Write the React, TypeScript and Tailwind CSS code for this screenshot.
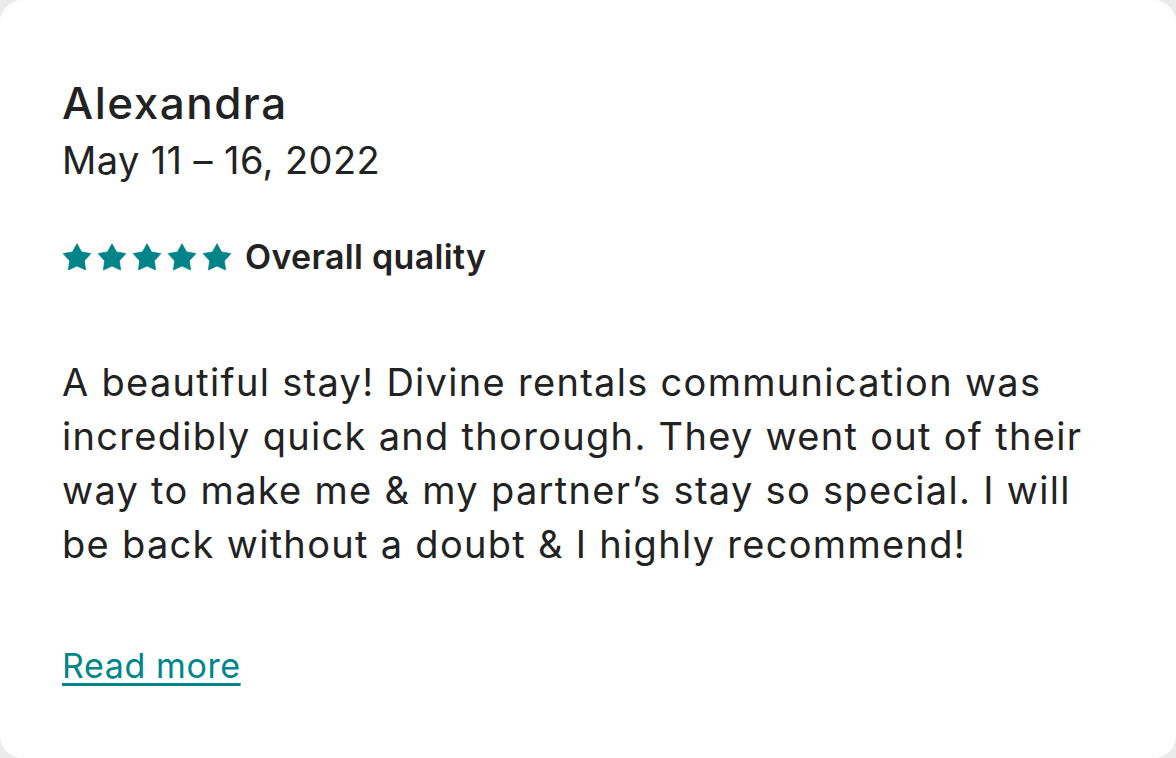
const lines = [
  'A beautiful stay! Divine rentals communication was',
  'incredibly quick and thorough. They went out of their',
  'way to make me & my partner’s stay so special. I will',
  'be back without a doubt & I highly recommend!',
];

function StarIcon() {
  return (
    <svg viewBox="0 0 24 23" className="h-[28px] w-[30px]" aria-hidden="true">
      <path
        fill="#008489"
        stroke="#008489"
        strokeWidth={0.6}
        strokeLinejoin="round"
        d="M12 0.6L15.76 7.32L23.4 8.7L18.09 14.48L19.03 22.2L12 18.9L4.97 22.2L5.91 14.48L0.6 8.7L8.24 7.32Z"
      />
    </svg>
  );
}

export default function App() {
  return (
    <div className="h-[758px] w-[1176px] bg-[#ebebeb]" style={{ fontFamily: 'Inter, "Noto Sans", sans-serif' }}>
      <div className="h-full w-full rounded-[22px] bg-white px-[62px] pt-[77px] text-[#222222]">
        {/* Reviewer */}
        <div className="text-[44px] font-medium leading-[52px] tracking-[1.5px]">Alexandra</div>
        <div className="mt-[8px] text-[38px] leading-[46px] tracking-[0.4px]">May 11 – 16, 2022</div>

        {/* Rating */}
        <div className="mt-[54px] flex h-[40px] items-center gap-[13px]">
          <div className="flex gap-[5px]">
            {[0, 1, 2, 3, 4].map((i) => (
              <StarIcon key={i} />
            ))}
          </div>
          <span className="text-[34px] font-semibold leading-[40px] tracking-[0.3px]">Overall quality</span>
        </div>

        {/* Review body */}
        <p className="mt-[78px] text-[38px] leading-[54px] tracking-[1.3px]">
          {lines.map((l) => (
            <span key={l} className="block whitespace-nowrap">
              {l}
            </span>
          ))}
        </p>

        <a
          href="#"
          className="mt-[75px] inline-block text-[34px] leading-[40px] tracking-[0.6px] text-[#00858a] underline decoration-[3px] underline-offset-[5px]"
        >
          Read more
        </a>
      </div>
    </div>
  );
}
